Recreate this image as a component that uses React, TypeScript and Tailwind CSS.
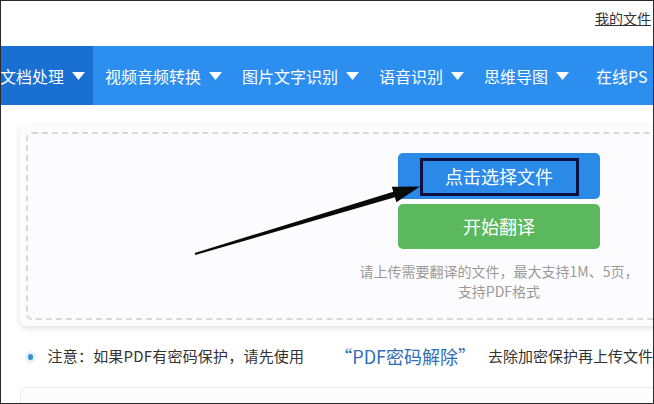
const cjk = { fontFamily: '"Noto Sans CJK SC", "Microsoft YaHei", sans-serif' };

function Caret() {
  return (
    <svg width="13" height="8" viewBox="0 0 13 8" className="ml-2 shrink-0">
      <path d="M0 0 H13 L6.5 8 Z" fill="#fff" />
    </svg>
  );
}

function NavItem({ label, caret = true, active = false, className = '' }: { label: string; caret?: boolean; active?: boolean; className?: string }) {
  return (
    <div className={`flex items-center h-full ${active ? 'bg-[#1a6fd3]' : ''} ${className}`}>
      <span className="text-[16px] text-white whitespace-nowrap">{label}</span>
      {caret && <Caret />}
    </div>
  );
}

export default function App() {
  return (
    <div className="w-[654px] h-[404px] relative overflow-hidden bg-white border border-[#2a2a2a]" style={cjk}>
      {/* header */}
      <div className="h-[45px] flex justify-end pt-[7px] pr-[2px]">
        <a className="text-[14px] text-[#333] underline leading-5">我的文件</a>
      </div>

      {/* nav */}
      <nav className="h-[59px] bg-[#2c8ff0] flex items-stretch whitespace-nowrap">
        <NavItem label="文档处理" active className="w-[93px] -ml-[1px]" />
        <NavItem label="视频音频转换" className="ml-[12px]" />
        <NavItem label="图片文字识别" className="ml-[20px]" />
        <NavItem label="语音识别" className="ml-[20px]" />
        <NavItem label="思维导图" className="ml-[20px]" />
        <NavItem label="在线PS" caret={false} className="ml-[27px]" />
      </nav>

      {/* upload card */}
      <div className="mt-[21px] ml-[19px] w-[660px] h-[200px] rounded-md bg-[#fcfcfe] shadow-[0_2px_6px_rgba(0,0,0,0.12)] p-[6px]">
        <div className="h-full rounded-md border-2 border-dashed border-[#d9d9dc] pt-[19px] pl-[326px]">
          <div className="w-[290px] flex flex-col items-center">
            <div className="w-[202px] h-[46px] rounded-[5px] bg-[#2b8ae8] flex items-center justify-center">
              <div className="w-[159px] h-[38px] mt-[1px] border-[3px] border-[#0b1040] flex items-center justify-center text-[18px] text-white">
                点击选择文件
              </div>
            </div>
            <div className="mt-[5px] w-[202px] h-[45px] rounded-[5px] bg-[#5cb85c] flex items-center justify-center text-[18px] text-white">
              开始翻译
            </div>
            <p className="mt-[12px] text-[14px] leading-[20px] text-[#9a9a9a] text-center whitespace-nowrap">
              请上传需要翻译的文件，最大支持1M、5页，
              <br />
              支持PDF格式
            </p>
          </div>
        </div>
      </div>

      {/* note */}
      <div className="mt-[17px] flex items-center pl-[27px] whitespace-nowrap">
        <span className="w-[6px] h-[6px] rounded-full bg-[#3a8fd0] shadow-[0_0_0_3px_rgba(58,143,208,0.12)]" />
        <span className="ml-[15px] text-[15px] text-[#333] tracking-[0.2px]">注意：如果PDF有密码保护，请先使用</span>
        <span className="ml-[30px] text-[18px] text-[#2f6db5]">“PDF密码解除”</span>
        <span className="ml-[12px] text-[15px] text-[#333]">去除加密保护再上传文件</span>
      </div>

      {/* next card edge */}
      <div className="mt-[17px] ml-[19px] h-[40px] border-t border-l border-[#ececec] rounded-tl-md bg-[#fcfcfd]" />

      {/* annotation arrow */}
      <svg className="absolute left-0 top-0 pointer-events-none" width="654" height="404">
        <polygon
          points="193.7,252 392.3,190.8 390.8,185.8 419,185.5 395.4,201.2 393.9,196.2 194.3,254"
          fill="#0a0a0a"
        />
      </svg>
    </div>
  );
}
